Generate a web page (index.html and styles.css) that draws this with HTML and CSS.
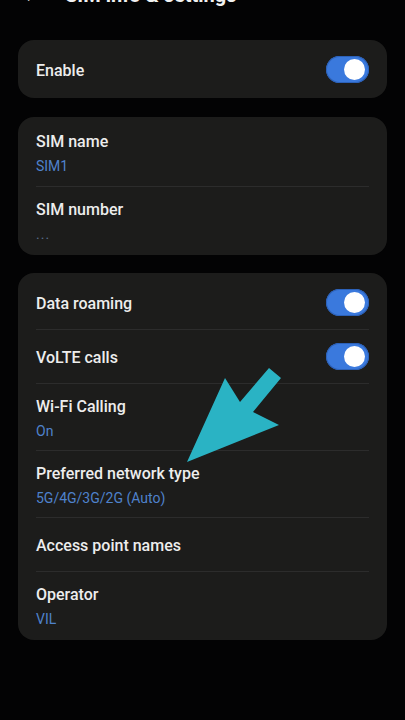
FILE: index.html
```html
<!DOCTYPE html>
<html lang="en">
<head>
<meta charset="utf-8">
<title>SIM info &amp; settings</title>
<link rel="stylesheet" href="styles.css">
</head>
<body>
<div class="screen">
  <header class="header">
    <span class="back">&#8592;</span>
    <span class="title">SIM info &amp; settings</span>
  </header>

  <section class="card">
    <div class="row single">
      <span class="label">Enable</span>
      <span class="toggle"><span class="knob"></span></span>
    </div>
  </section>

  <section class="card">
    <div class="row double">
      <div class="label">SIM name</div>
      <div class="value">SIM1</div>
    </div>
    <div class="row double">
      <div class="label">SIM number</div>
      <div class="value dots">...</div>
    </div>
  </section>

  <section class="card">
    <div class="row single">
      <span class="label">Data roaming</span>
      <span class="toggle"><span class="knob"></span></span>
    </div>
    <div class="row single">
      <span class="label">VoLTE calls</span>
      <span class="toggle"><span class="knob"></span></span>
    </div>
    <div class="row double">
      <div class="label">Wi-Fi Calling</div>
      <div class="value">On</div>
    </div>
    <div class="row double">
      <div class="label">Preferred network type</div>
      <div class="value">5G/4G/3G/2G (Auto)</div>
    </div>
    <div class="row single">
      <span class="label">Access point names</span>
    </div>
    <div class="row double">
      <div class="label">Operator</div>
      <div class="value">VIL</div>
    </div>
  </section>

  <svg class="pointer" width="405" height="720" viewBox="0 0 405 720" aria-hidden="true">
    <polygon points="187,462 225,378 240,402 269,368 281,378 253,412 279,425" fill="#2ab3c4"/>
  </svg>
</div>
</body>
</html>
```

FILE: styles.css
```css
html, body {
  margin: 0;
  padding: 0;
  background: #030304;
}

body {
  font-family: Roboto, "Noto Sans", "Liberation Sans", sans-serif;
  color: #eeeeee;
  overflow: hidden;
}

.screen {
  position: relative;
  display: flow-root;
  width: 405px;
  height: 720px;
  padding: 0 18px;
  box-sizing: border-box;
}

.header {
  display: flex;
  align-items: center;
  gap: 23px;
  height: 24px;
  line-height: 24px;
  margin-top: -17px;
  margin-bottom: 33px;
  padding-left: 4px;
}

.back {
  font-size: 20px;
  font-weight: 700;
  color: #f2f2f2;
}

.title {
  font-size: 20px;
  font-weight: 700;
  color: #f2f2f2;
}

.card {
  background: #1c1c1b;
  border-radius: 16px;
  padding: 2px 18px;
  margin-bottom: 19px;
}

.card + .card + .card {
  margin-top: -1px;
}

.row {
  box-sizing: border-box;
  border-top: 1px solid #2c2c2c;
}

.row:first-child {
  border-top: none;
}

.single {
  height: 54px;
  padding-top: 3px;
  display: flex;
  align-items: center;
  justify-content: space-between;
}

.single .toggle {
  margin-top: -3px;
}

.double {
  height: 67px;
  padding-top: 12px;
}

.label {
  font-size: 16px;
  line-height: 22px;
  font-weight: 500;
  color: #ededed;
}

.value {
  margin-top: 3px;
  font-size: 14px;
  line-height: 20px;
  color: #4f82cc;
}

.dots {
  color: #5a6f8c;
  letter-spacing: 1px;
}

.toggle {
  position: relative;
  width: 43px;
  height: 27px;
  border-radius: 14px;
  background: #3a79dd;
  box-shadow: inset 0 0 0 1px #2c61b8;
}

.knob {
  position: absolute;
  right: 4px;
  top: 3px;
  width: 21px;
  height: 21px;
  border-radius: 50%;
  background: #ffffff;
}

.pointer {
  position: absolute;
  left: 0;
  top: 0;
  pointer-events: none;
}
```
